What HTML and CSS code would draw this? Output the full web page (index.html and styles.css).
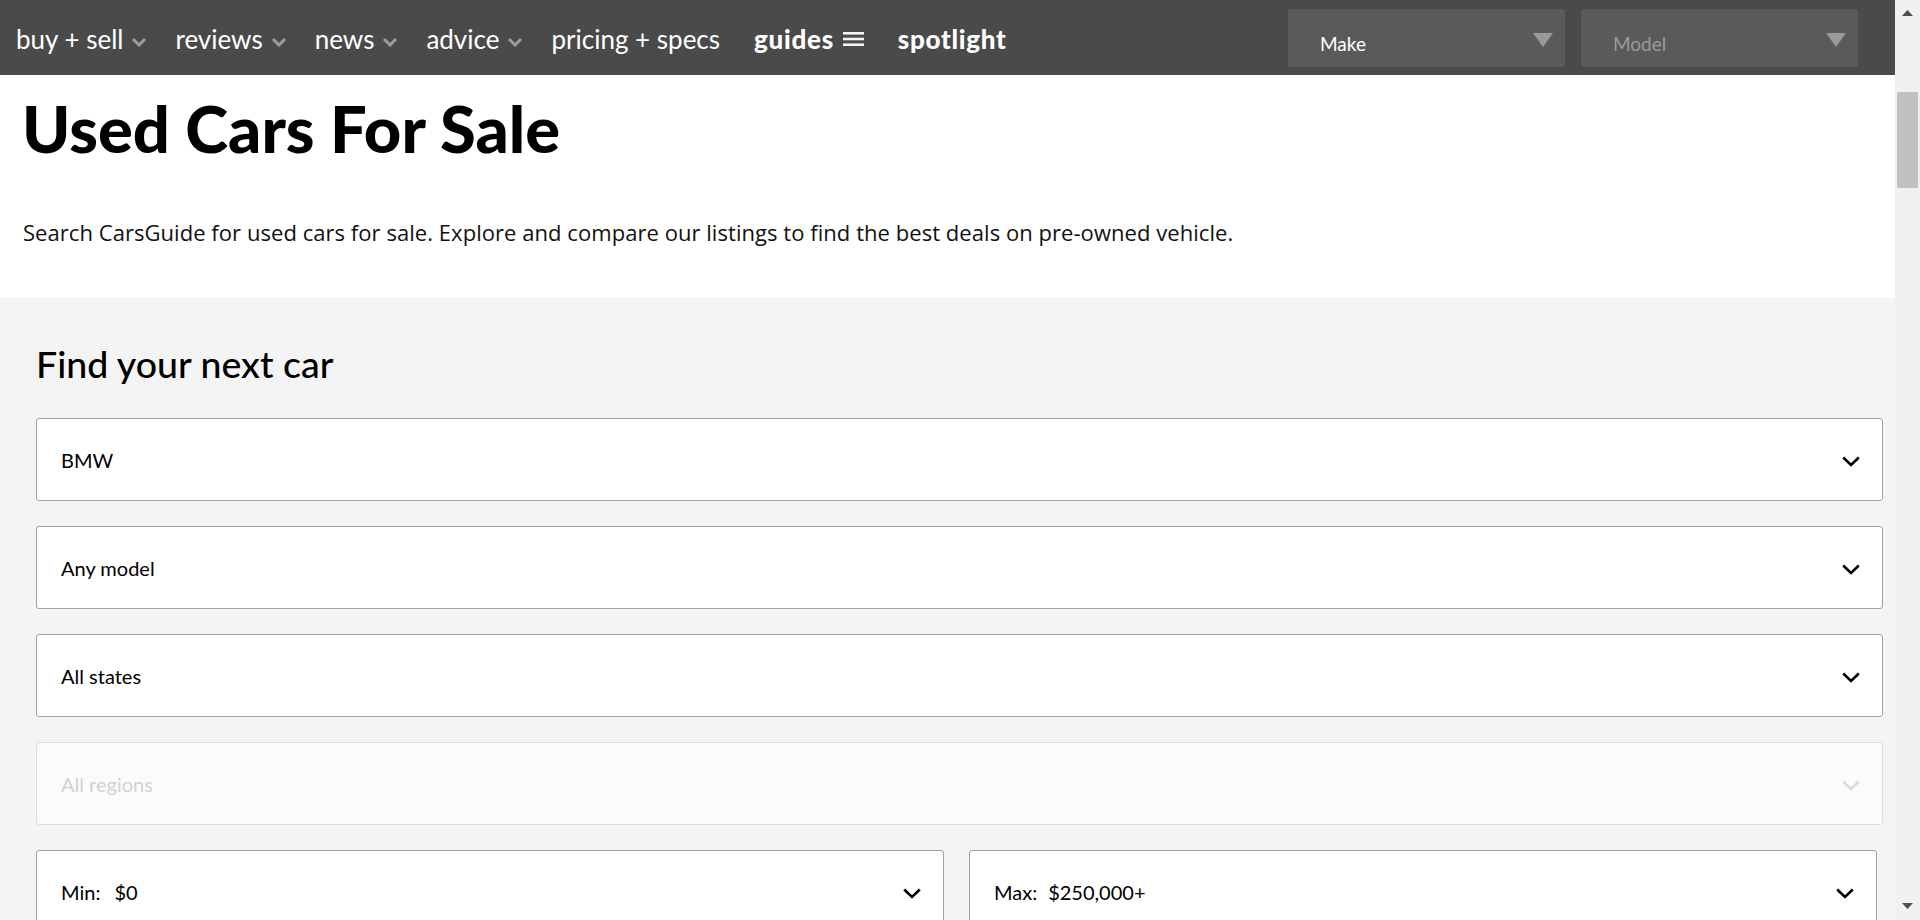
FILE: index.html
```html
<!DOCTYPE html>
<html lang="en">
<head>
<meta charset="utf-8">
<title>Used Cars For Sale | CarsGuide</title>
<link rel="stylesheet" href="styles.css">
</head>
<body>
<div class="page">
  <div class="main">
    <header class="nav">
      <ul class="nav-list">
        <li class="nav-item">buy + sell<svg class="nav-chev" viewBox="0 0 16 10" width="16" height="10"><path d="M2 2 L8 8 L14 2" /></svg></li>
        <li class="nav-item">reviews<svg class="nav-chev" viewBox="0 0 16 10" width="16" height="10"><path d="M2 2 L8 8 L14 2" /></svg></li>
        <li class="nav-item">news<svg class="nav-chev" viewBox="0 0 16 10" width="16" height="10"><path d="M2 2 L8 8 L14 2" /></svg></li>
        <li class="nav-item">advice<svg class="nav-chev" viewBox="0 0 16 10" width="16" height="10"><path d="M2 2 L8 8 L14 2" /></svg></li>
        <li class="nav-item">pricing + specs</li>
        <li class="nav-item nav-bold nav-guides">guides<svg class="nav-burger" viewBox="0 0 21 16" width="21" height="16"><rect x="0" y="1" width="21" height="2.6"/><rect x="0" y="6.7" width="21" height="2.6"/><rect x="0" y="12.4" width="21" height="2.6"/></svg></li>
        <li class="nav-item nav-bold">spotlight</li>
      </ul>
      <div class="nav-selects">
        <div class="nav-select">
          <span class="nav-select-label">Make</span>
          <svg class="nav-tri" viewBox="0 0 20 14" width="20" height="14"><path d="M0 0 H20 L10 14 Z"/></svg>
        </div>
        <div class="nav-select is-muted">
          <span class="nav-select-label">Model</span>
          <svg class="nav-tri" viewBox="0 0 20 14" width="20" height="14"><path d="M0 0 H20 L10 14 Z"/></svg>
        </div>
      </div>
    </header>

    <section class="intro">
      <h1 class="intro-title">Used Cars For Sale</h1>
      <p class="intro-text">Search CarsGuide for used cars for sale. Explore and compare our listings to find the best deals on pre-owned vehicle.</p>
    </section>

    <section class="finder">
      <h2 class="finder-title">Find your next car</h2>
      <div class="finder-fields">
        <div class="field">
          <span class="field-value">BMW</span>
          <svg class="field-chev" viewBox="0 0 18 11" width="18" height="11"><path d="M1.2 1.5 L9 9 L16.8 1.5"/></svg>
        </div>
        <div class="field">
          <span class="field-value">Any model</span>
          <svg class="field-chev" viewBox="0 0 18 11" width="18" height="11"><path d="M1.2 1.5 L9 9 L16.8 1.5"/></svg>
        </div>
        <div class="field">
          <span class="field-value">All states</span>
          <svg class="field-chev" viewBox="0 0 18 11" width="18" height="11"><path d="M1.2 1.5 L9 9 L16.8 1.5"/></svg>
        </div>
        <div class="field is-disabled">
          <span class="field-value">All regions</span>
          <svg class="field-chev" viewBox="0 0 18 11" width="18" height="11"><path d="M1.2 1.5 L9 9 L16.8 1.5"/></svg>
        </div>
        <div class="field-row">
          <div class="field">
            <span class="field-value"><span class="field-label">Min:</span>$0</span>
            <svg class="field-chev" viewBox="0 0 18 11" width="18" height="11"><path d="M1.2 1.5 L9 9 L16.8 1.5"/></svg>
          </div>
          <div class="field">
            <span class="field-value"><span class="field-label field-label-max">Max:</span>$250,000+</span>
            <svg class="field-chev" viewBox="0 0 18 11" width="18" height="11"><path d="M1.2 1.5 L9 9 L16.8 1.5"/></svg>
          </div>
        </div>
      </div>
    </section>
  </div>

  <div class="scrollbar" aria-hidden="true">
    <svg class="sb-arrow" viewBox="0 0 11 6" width="11" height="6"><path d="M0 6 L5.5 0 L11 6 Z"/></svg>
    <div class="sb-thumb"></div>
    <div class="sb-space"></div>
    <svg class="sb-arrow" viewBox="0 0 11 6" width="11" height="6"><path d="M0 0 L11 0 L5.5 6 Z"/></svg>
  </div>
</div>
</body>
</html>
```

FILE: styles.css
```css
* {
  box-sizing: border-box;
}

html, body {
  margin: 0;
  padding: 0;
  height: 920px;
  overflow: hidden;
}

body {
  font-family: Lato, "Noto Sans", "Liberation Sans", sans-serif;
  color: #000;
  background: #fff;
}

.page {
  display: flex;
  width: 1920px;
  height: 920px;
}

.main {
  width: 1895px;
  display: flex;
  flex-direction: column;
  background: #f4f4f4;
}

/* ---------- nav ---------- */
.nav {
  height: 75px;
  flex: none;
  background: #4a4a4a;
  display: flex;
  align-items: center;
  padding: 0 37px 0 16px;
}

.nav-list {
  list-style: none;
  margin: 0;
  padding: 0;
  display: flex;
  align-items: center;
  gap: 28px;
  padding-top: 3px;
}

.nav-item {
  display: flex;
  align-items: center;
  color: #fff;
  font-size: 26px;
  line-height: 32px;
  white-space: nowrap;
}

.nav-chev {
  margin-left: 8px;
  margin-top: 5px;
  fill: none;
  stroke: #9c9c9c;
  stroke-width: 3;
}

.nav-bold {
  font-weight: 900;
  letter-spacing: 0.7px;
}

.nav-guides {
  margin-left: 6px;
}

.nav-burger {
  margin-left: 9px;
  margin-right: 6px;
  fill: #f2f2f2;
}

.nav-selects {
  margin-left: auto;
  display: flex;
  gap: 16px;
}

.nav-select {
  width: 277px;
  height: 58px;
  background: #5a5a5a;
  border-radius: 3px;
  display: flex;
  align-items: center;
  justify-content: space-between;
  padding: 10px 12px 0 32px;
}

.nav-select-label {
  color: #fff;
  font-size: 19px;
  padding-top: 2px;
}

.nav-select.is-muted .nav-select-label {
  color: #9a9a9a;
}

.nav-tri {
  fill: #9a9a9a;
  margin-bottom: 6px;
}

/* ---------- intro ---------- */
.intro {
  background: #fff;
  padding: 15px 22px 53px 22px;
}

.intro-title {
  margin: 0;
  font-size: 65px;
  line-height: 77px;
  font-weight: 900;
}

.intro-text {
  margin: 52px 0 0 1px;
  font-family: "Open Sans", Lato, sans-serif;
  font-size: 22px;
  line-height: 26px;
  letter-spacing: 0.05px;
  color: #111;
}

/* ---------- finder ---------- */
.finder {
  flex: 1;
  background: #f4f4f4;
  padding: 44px 12px 0 36px;
}

.finder-title {
  margin: 0;
  font-size: 37.5px;
  line-height: 44px;
  font-weight: 500;
}

.finder-fields {
  margin-top: 32px;
  display: flex;
  flex-direction: column;
  gap: 25px;
}

.field {
  height: 83px;
  background: #fff;
  border: 1px solid #a0a0a0;
  border-radius: 3px;
  display: flex;
  align-items: center;
  justify-content: space-between;
  padding: 0 22px 0 24px;
}

.field-value {
  font-size: 20px;
  color: #000;
}

.field-label {
  margin-right: 14px;
}

.field-label-max {
  margin-right: 11px;
}

.field-chev {
  fill: none;
  stroke: #000;
  stroke-width: 2.6;
  margin-top: 3px;
}

.field.is-disabled {
  background: #fbfbfb;
  border-color: #dcdcdc;
}

.field.is-disabled .field-value {
  color: #d2d2d2;
}

.field.is-disabled .field-chev {
  stroke: #dcdcdc;
}

.field-row {
  display: grid;
  grid-template-columns: 908px 908px;
  gap: 25px;
}

/* ---------- scrollbar ---------- */
.scrollbar {
  width: 25px;
  height: 920px;
  background: #f0f0f0;
  display: flex;
  flex-direction: column;
  align-items: center;
  padding: 10px 0 11px 0;
}

.sb-arrow {
  flex: none;
  fill: #505050;
}

.sb-thumb {
  flex: none;
  width: 21px;
  height: 96px;
  margin-top: 76px;
  background: #c1c1c1;
}

.sb-space {
  flex: 1;
}
```
